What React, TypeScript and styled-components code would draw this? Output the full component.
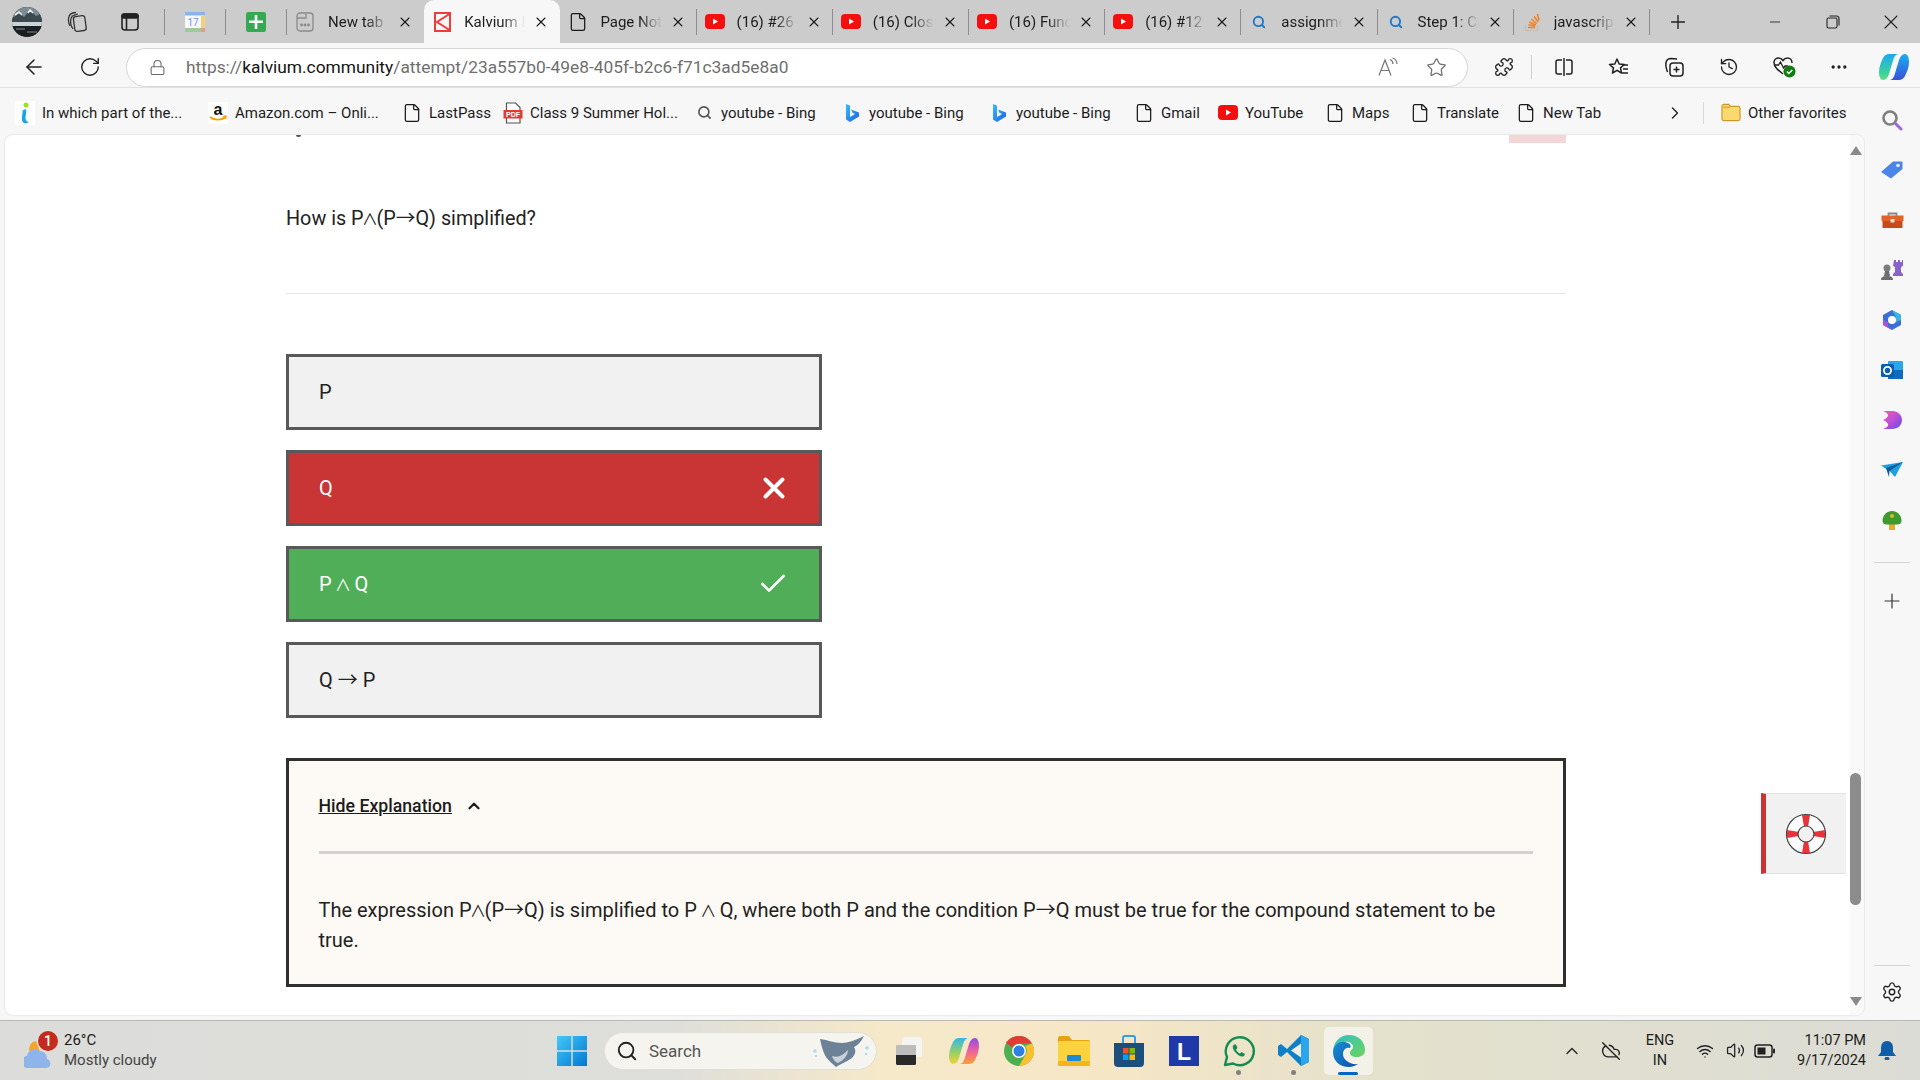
import React from 'react';
import styled, { createGlobalStyle } from 'styled-components';
import {
  ArrowLeft, RotateCw, X, Plus, Minus, Star, File, Search, ChevronRight, ChevronUp, Check,
  Settings, Puzzle, History, MoreHorizontal, Wifi, Volume2, CloudOff, Lock,
} from 'lucide-react';

const Global = createGlobalStyle`
  html, body { margin: 0; padding: 0; background: #f7f7f7; }
  body { font-family: Roboto, "Liberation Sans", sans-serif; color: #1c1c1c; overflow: hidden; }
  * { box-sizing: border-box; }
`;

const Screen = styled.div`
  width: 1920px; height: 1080px; display: flex; flex-direction: column; overflow: hidden;
`;

/* ---------- tab strip ---------- */
const TabStrip = styled.div`
  height: 43px; background: #cccccc; display: flex; align-items: stretch; flex: none;
`;
const StripTools = styled.div`
  width: 288px; flex: none; display: flex; align-items: center; padding-left: 12px;
`;
const ToolSlot = styled.div<{ $w: number }>`
  width: ${p => p.$w}px; height: 100%; flex: none; display: flex; align-items: center; justify-content: center;
`;
const VSep = styled.div`
  width: 1px; height: 26px; background: #8e8e8e; flex: none;
`;
const Tab = styled.div<{ $active?: boolean; $sep?: boolean }>`
  width: 136.2px; flex: none; position: relative; display: flex; align-items: center;
  padding-left: ${p => (p.$active ? 10 : 8)}px; padding-right: 11px;
  background: ${p => (p.$active ? '#f7f7f7' : 'transparent')};
  border-radius: ${p => (p.$active ? '10px 10px 0 0' : '0')};
  ${p => p.$sep ? `&::after { content: ''; position: absolute; right: 0; top: 9px; height: 26px; width: 1px; background: #8e8e8e; }` : ''}
`;
const TabIcon = styled.div<{ $w: number; $pad?: number }>`
  width: ${p => p.$w}px; padding-left: ${p => p.$pad || 0}px; flex: none; display: flex; align-items: center; justify-content: flex-start;
`;
const TabTitle = styled.div`
  flex: 1; min-width: 0; margin-right: 8px; font-size: 15px; white-space: nowrap; overflow: hidden; color: #1c1c1c;
  -webkit-mask-image: linear-gradient(90deg, #000 62%, transparent 100%);
  mask-image: linear-gradient(90deg, #000 62%, transparent 100%);
`;
const TabClose = styled.div`
  width: 16px; flex: none; display: flex; align-items: center; justify-content: center; color: #1a1a1a;
`;
const NewTabBtn = styled.div`
  width: 56px; flex: none; display: flex; align-items: center; justify-content: center; color: #222;
`;
const WindowControls = styled.div`
  margin-left: auto; display: flex; align-items: center; color: #222;
`;
const WinBtn = styled.div`
  width: 58px; height: 43px; display: flex; align-items: center; justify-content: center;
`;

/* ---------- toolbar ---------- */
const Toolbar = styled.div`
  height: 45px; flex: none; background: #f7f7f7; display: flex; align-items: center; border-bottom: 1px solid #e3e3e3;
  padding: 4px 0 0 6px;
`;
const NavBtn = styled.div`
  width: 56px; flex: none; display: flex; align-items: center; justify-content: center; color: #222;
`;
const AddressBar = styled.div`
  width: 1342px; height: 39px; flex: none; margin-left: 8px; background: #fff; border: 1px solid #d6d6d6; border-radius: 20px;
  display: flex; align-items: center; padding: 0 20px 0 22px; color: #6b6b6b;
`;
const AddressText = styled.div`
  margin-left: 20px; font-size: 17.35px; color: #6f6f6f; white-space: nowrap;
  b { font-weight: 400; color: #141414; }
`;
const AddressActions = styled.div`
  margin-left: auto; display: flex; align-items: center; gap: 28px; color: #6f6f6f;
`;
const ToolIcons = styled.div`
  flex: 1; display: flex; align-items: center; padding-left: 8px; color: #222;
`;
const ToolIcon = styled.div`
  width: 55px; flex: none; display: flex; align-items: center; justify-content: center;
`;
const ToolSep = styled.div`
  width: 1px; height: 24px; background: #cfcfcf; margin: 0 4px 0 0; flex: none;
`;

/* ---------- body ---------- */
const Body = styled.div`
  flex: 1; display: flex; min-height: 0;
`;
const MainColumn = styled.div`
  width: 1864px; flex: none; display: flex; flex-direction: column; min-height: 0;
`;
const Bookmarks = styled.div`
  height: 47px; flex: none; display: flex; align-items: center; padding: 2px 0 0 15px; font-size: 15px; color: #1c1c1c;
`;
const Bookmark = styled.div<{ $w: number }>`
  width: ${p => p.$w}px; flex: none; display: flex; align-items: center; white-space: nowrap;
`;
const BookmarkIcon = styled.div`
  width: 20px; margin-right: 7px; flex: none; display: flex; align-items: center; justify-content: center;
`;
const BookmarkMore = styled.div`
  width: 56px; display: flex; justify-content: center; margin-left: 29px; color: #222; flex: none;
`;
const BookmarkSep = styled.div`
  width: 1px; height: 22px; background: #d8d8d8; margin: 0 17px 0 0; flex: none;
`;

const Card = styled.div`
  flex: 1; margin: 0 0 5px 5px; background: #fff; border-radius: 8px; box-shadow: 0 0 2px rgba(0,0,0,.18);
  display: flex; position: relative; overflow: hidden; min-height: 0;
`;
const Content = styled.div`
  width: 1845px; flex: none; padding-left: 281px; padding-right: 284px;
`;
const TopClip = styled.div`
  height: 8px; display: flex; justify-content: space-between;
`;
const ClipMark = styled.div`
  width: 5px; height: 2px; margin-left: 10px; background: #555; border-radius: 0 0 3px 3px;
`;
const ClipBar = styled.div`
  width: 57px; height: 8px; background: #f3d6d6;
`;
const Question = styled.div`
  margin-top: 61px; font-size: 19.8px; line-height: 30px; color: #222;
`;
const Rule = styled.div`
  height: 1px; background: #e6e6e6; margin-top: 59px;
`;
const Options = styled.div`
  margin-top: 60px; display: flex; flex-direction: column; gap: 20px;
`;
const Option = styled.div<{ $state?: 'wrong' | 'right' }>`
  width: 536px; height: 76px; border: 3px solid #595959; display: flex; align-items: center; justify-content: space-between;
  padding: 0 28px 0 30px; font-size: 20px;
  background: ${p => (p.$state === 'wrong' ? '#c93434' : p.$state === 'right' ? '#4fae57' : '#f1f1f1')};
  color: ${p => (p.$state ? '#fff' : '#222')};
`;
const CheckMark = styled(Check)`
  margin-right: 2px;
`;
const Arrow = styled.span`
  font-family: "Noto Sans CJK SC", sans-serif; line-height: 0;
`;
const Wedge = styled.span`
  font-family: "Noto Sans CJK SC", sans-serif; line-height: 0; font-size: 0.8em; margin: 0 -1.5px;
`;
const Explain = styled.div`
  margin-top: 40px; height: 229px; border: 3px solid #2f2f2f; background: #fdfaf6; padding: 30px 30px 0 29.5px;
`;
const ExplainHead = styled.div`
  height: 30px; display: flex; align-items: center; gap: 13px; font-size: 17.7px; font-weight: 500; color: #1c1c1c;
`;
const HeadLink = styled.span`
  text-decoration: underline;
`;
const ExplainRule = styled.div`
  height: 3px; background: #d2d2d2; margin-top: 30px;
`;
const ExplainText = styled.div`
  margin-top: 41px; font-size: 20px; line-height: 30px; color: #222;
`;

const Help = styled.div`
  position: absolute; left: 1756px; top: 658px; width: 85px; height: 81px;
  background: #f1f1f1; border-left: 5px solid #c93434; border-top: 1px solid #e2e2e2; border-bottom: 1px solid #e2e2e2;
  display: flex; align-items: center; justify-content: center;
`;
const Track = styled.div`
  width: 14px; flex: 1; background: #f9f9f9; display: flex; flex-direction: column; align-items: center; padding: 11px 3px 9px 0;
`;
const ArrowUp = styled.div`
  width: 0; height: 0; flex: none; border-left: 6px solid transparent; border-right: 6px solid transparent; border-bottom: 9px solid #8a8a8a;
`;
const ArrowDown = styled.div`
  width: 0; height: 0; flex: none; border-left: 6px solid transparent; border-right: 6px solid transparent; border-top: 9px solid #8a8a8a; margin-top: auto;
`;
const Thumb = styled.div`
  width: 11px; height: 132px; flex: none; background: #8c8c8c; border-radius: 6px; margin-top: 618px;
`;

/* ---------- sidebar ---------- */
const Sidebar = styled.div`
  flex: 1; background: #f7f7f7; display: flex; flex-direction: column; align-items: center; padding-top: 7px;
`;
const SideIcon = styled.div`
  height: 50px; flex: none; display: flex; align-items: center; justify-content: center; color: #333;
`;
const SideSep = styled.div`
  width: 36px; height: 1px; background: #d4d4d4; margin: 17px 0 13px; flex: none;
`;
const FootSep = styled(SideSep)`
  margin: 0 0 15px;
`;
const SideBottom = styled.div`
  margin-top: auto; width: 100%; display: flex; flex-direction: column; align-items: center; padding-bottom: 17px; color: #222;
`;

/* ---------- taskbar ---------- */
const Taskbar = styled.div`
  height: 60px; flex: none; border-top: 1px solid #b9b9b4; display: flex; align-items: center; position: relative;
  background: linear-gradient(90deg, #dcdcda 0%, #dededa 35%, #f6e9c9 46%, #f5e6c6 58%, #e4e1cc 72%, #dcdcd6 100%);
`;
const Weather = styled.div`
  width: 544px; flex: none; padding-left: 24px; display: flex; align-items: center; gap: 8px; position: relative;
`;
const WeatherIcon = styled.div`
  width: 32px; height: 40px; position: relative; flex: none;
`;
const Badge = styled.div`
  position: absolute; left: 14px; top: 0px; width: 20px; height: 20px; border-radius: 50%; background: #c42b1c;
  color: #fff; font-size: 14px; font-weight: 500; display: flex; align-items: center; justify-content: center;
`;
const WeatherText = styled.div`
  font-size: 15px; line-height: 20px; color: #1c1c1c; margin-top: -1px;
  small { display: block; font-size: 15px; color: #444; }
`;
const StartSlot = styled.div`
  width: 55px; flex: none; display: flex; justify-content: center;
`;
const SearchPill = styled.div`
  width: 273px; height: 38px; margin-left: 5px; flex: none; border-radius: 19px; background: #f6f4ee; border: 1px solid #e2dfd6;
  display: flex; align-items: center; padding: 0 6px 0 11px; color: #222; gap: 11px; font-size: 17px;
`;
const SearchWord = styled.span`
  color: #555; flex: 1;
`;
const Apps = styled.div`
  display: flex; align-items: center; margin-left: 4px;
`;
const AppSlot = styled.div<{ $active?: boolean; $dot?: boolean }>`
  width: 55px; height: 48px; flex: none; display: flex; align-items: center; justify-content: center; position: relative;
  ${p => p.$active ? `&::before { content: ''; position: absolute; left: 3px; right: 3px; top: 0; bottom: 0; background: #f4f2e8; border-radius: 5px; }
    &::after { content: ''; position: absolute; left: 17px; width: 20px; bottom: 0; height: 3px; background: #0067c0; border-radius: 2px; }` : ''}
  ${p => p.$dot ? `&::after { content: ''; position: absolute; left: 25px; bottom: 0; width: 5px; height: 5px; background: #808080; border-radius: 50%; }` : ''}
  > * { position: relative; z-index: 1; }
`;
const Tray = styled.div`
  margin-left: auto; padding-right: 12px; display: flex; align-items: center; color: #222; height: 100%;
`;
const TraySlot = styled.div<{ $w: number }>`
  width: ${p => p.$w}px; flex: none; display: flex; justify-content: center; align-items: center;
`;
const TrayText = styled.div<{ $w: number; $align?: string }>`
  width: ${p => p.$w}px; flex: none; font-size: 14.5px; line-height: 20px; text-align: ${p => p.$align || 'center'}; color: #1c1c1c;
`;

/* ---------- drawings ---------- */
const Avatar = () => (
  <svg width="30" height="30" viewBox="0 0 30 30">
    <defs><clipPath id="av"><circle cx="15" cy="15" r="15" /></clipPath></defs>
    <g clipPath="url(#av)">
      <rect width="30" height="30" fill="#2c3338" />
      <rect width="30" height="10" fill="#7d8b94" />
      <path d="M0 12 L7 5 L12 10 L18 3 L24 9 L30 6 V16 H0Z" fill="#3c4a50" />
      <path d="M3 8 L7 5 L10 8 M16 6 L18 3 L21 6" stroke="#e8edf0" strokeWidth="1.6" fill="none" />
      <rect y="15" width="30" height="4" fill="#c9d3d8" />
      <rect y="19" width="30" height="11" fill="#1a1f22" />
      <path d="M4 22h9M15 25h10" stroke="#7b8a90" strokeWidth="1.2" />
    </g>
  </svg>
);
const CollectionsIcon = () => (
  <svg width="22" height="22" viewBox="0 0 22 22" fill="none" stroke="#333" strokeWidth="1.3">
    <rect x="8" y="5" width="11.5" height="15" rx="2.5" transform="rotate(-8 14 12)" />
    <path d="M7 18C5 15 4 11 5 7.5c.4-1.7 1.8-3 3.5-3.4L12 3" />
    <path d="M4 15C2.5 12 2 8.5 3 5.5 3.5 3.8 5 2.5 7 2l3-.5" />
  </svg>
);
const TabsIcon = () => (
  <svg width="20" height="20" viewBox="0 0 20 20" fill="none" stroke="#222" strokeWidth="1.6">
    <rect x="2" y="2" width="16" height="16" rx="3" />
    <rect x="2" y="2" width="16" height="4" rx="2" fill="#222" />
    <path d="M6.5 5v13" />
  </svg>
);
const CalendarIcon = () => (
  <svg width="20" height="20" viewBox="0 0 20 20">
    <rect width="20" height="20" rx="2" fill="#f6f8fd" />
    <rect width="20" height="3.5" fill="#8ab4e8" />
    <rect y="16" width="16" height="4" fill="#9ccc9c" />
    <rect x="16" y="3.5" width="4" height="13" fill="#f0d27a" />
    <rect x="16" y="16" width="4" height="4" fill="#e89a8e" />
    <text x="8" y="14" fontSize="10" textAnchor="middle" fontFamily="Roboto" fill="#6b9ad8">17</text>
  </svg>
);
const GreenPlus = () => (
  <svg width="20" height="20" viewBox="0 0 20 20">
    <rect width="20" height="20" rx="2.5" fill="#34a853" />
    <path d="M8.7 3h2.6v5.500H17V11h-5.700v6H8.700v-6H3V8.500h5.700z" fill="#fff" />
  </svg>
);
const NewTabFav = () => (
  <svg width="18" height="22" viewBox="0 0 18 22" fill="none" stroke="#8a8a8a" strokeWidth="1.3">
    <rect x="1" y="2" width="16" height="18" rx="3" />
    <path d="M1 7h9V2" />
    <circle cx="5.5" cy="14" r=".8" fill="#8a8a8a" /><circle cx="9" cy="14" r=".8" fill="#8a8a8a" /><circle cx="12.5" cy="14" r=".8" fill="#8a8a8a" />
  </svg>
);
const KalviumFav = () => (
  <svg width="17" height="20" viewBox="0 0 17 20" fill="none" stroke="#ef3b3b" strokeWidth="2">
    <rect x="1" y="1" width="15" height="18" />
    <path d="M15.5 2 L3 10 L15.5 18" />
  </svg>
);
const YouTube = () => (
  <svg width="20" height="15" viewBox="0 0 20 15">
    <rect width="20" height="15" rx="4" fill="#f40f0f" />
    <path d="M8 4.500v6l5-3z" fill="#fff" />
  </svg>
);
const StackOverflow = () => (
  <svg width="17" height="20" viewBox="0 0 17 20" fill="none">
    <path d="M1.500 13v5.500h12V13" stroke="#c9c0b4" strokeWidth="1.500" />
    <path d="M4 15.500h7M4.300 12.800l7 1.200M5.300 10l6.500 3M7.300 7l5.400 4.600M10 4.300l4 5.600M13.400 2l1.600 6.500" stroke="#f48024" strokeWidth="1.600" />
  </svg>
);
const DocIcon = () => <File size={20} strokeWidth={1.5} color="#1a1a1a" />;
const BlueSearch = () => <Search size={14} strokeWidth={3.2} color="#1f78c8" />;
const SearchGray = () => <Search size={15} strokeWidth={2.6} color="#555" />;
const BingIcon = () => (
  <svg width="15" height="20" viewBox="0 0 15 20">
    <defs><linearGradient id="bg" x1="0" y1="0" x2="1" y2="1"><stop offset="0" stopColor="#37bdff" /><stop offset="1" stopColor="#1e60e0" /></linearGradient></defs>
    <path d="M1 1l4 1.500v11.500l5-3-2.500-1.200L6 6.500l8 3v4L5 19l-4-2.500z" fill="url(#bg)" />
  </svg>
);
const AmazonIcon = () => (
  <svg width="20" height="22" viewBox="0 0 20 22">
    <rect width="20" height="22" fill="#fff" />
    <text x="10" y="13" textAnchor="middle" fontSize="16" fontWeight="700" fontFamily="Liberation Sans" fill="#111">a</text>
    <path d="M2 15c4 3.500 11 3.500 15 .5" stroke="#f90" strokeWidth="1.800" fill="none" />
    <path d="M15 14.500l3-.5-.5 3" stroke="#f90" strokeWidth="1.300" fill="none" />
  </svg>
);
const PdfIcon = () => (
  <svg width="20" height="22" viewBox="0 0 20 22">
    <path d="M3.500 1h9l4.500 4.500V21h-13.500z" fill="#fff" stroke="#555" strokeWidth="1.200" />
    <rect x="0.500" y="8" width="19" height="8.500" fill="#e53935" />
    <text x="10" y="15" textAnchor="middle" fontSize="7" fontWeight="700" fontFamily="Liberation Sans" fill="#fff">PDF</text>
  </svg>
);
const InfoI = () => (
  <svg width="20" height="24" viewBox="0 0 20 24">
    <rect width="20" height="24" fill="#fff" />
    <circle cx="11" cy="4" r="2.500" fill="#9be21f" />
    <path d="M11 8c1 4-1.500 8 0 11 .5 1.500 2 2 3 1.500-1 2-5 3-6.500 0-1.500-3 .5-8 0-11z" fill="#18a5e6" />
  </svg>
);
const FolderIcon = () => (
  <svg width="21" height="19" viewBox="0 0 21 19">
    <path d="M1 3a2 2 0 012-2h5l2 2h8a2 2 0 012 2v11a2 2 0 01-2 2H3a2 2 0 01-2-2z" fill="#fbd970" stroke="#c79a2b" strokeWidth="1.200" />
    <path d="M1 5h8l1.500-2H3z" fill="#e9b13c" />
  </svg>
);
const ReadAloud = () => (
  <svg width="20" height="20" viewBox="0 0 20 20" fill="none" stroke="#777" strokeWidth="1.200">
    <path d="M1 18.500L7 3l6 15.500M3 13.500h8" />
    <path d="M12 2.500c2 .8 3 2.500 3 4.500M14.500 1c3 1 4.500 3.500 4.500 6" />
  </svg>
);
const SplitIcon = () => (
  <svg width="20" height="20" viewBox="0 0 20 20" fill="none" stroke="#222" strokeWidth="1.500">
    <path d="M8 3H4a2 2 0 00-2 2v10a2 2 0 002 2h4M12 3h4a2 2 0 012 2v10a2 2 0 01-2 2h-4M10 1v18" />
  </svg>
);
const FavList = () => (
  <svg width="21" height="20" viewBox="0 0 21 20" fill="none" stroke="#222" strokeWidth="1.500">
    <path d="M9 2l2.200 5 5 .5-3.700 3.400 1 5.100L9 13.300 4.500 16l1-5.100L1.500 7.500l5.300-.5z" strokeLinejoin="round" />
    <path d="M14 8h6M15 12h5M14 16h6" />
  </svg>
);
const CollectAdd = () => (
  <svg width="20" height="20" viewBox="0 0 20 20" fill="none" stroke="#222" strokeWidth="1.500">
    <rect x="6" y="6" width="13" height="13" rx="3" />
    <path d="M12.500 9.500v6M9.500 12.500h6" />
    <path d="M3.500 15C2 11 1.500 8 2 5.500 2.500 3 4.500 1.500 7 1.500l6 .5" />
  </svg>
);
const HeartCheck = () => (
  <svg width="24" height="22" viewBox="0 0 24 22" fill="none">
    <path d="M11 18C6 14 2 11 2 6.500 2 3.500 4.500 2 6.500 2c2 0 3.500 1 4.500 2.500C12 3 13.500 2 15.500 2 18 2 20 4 20 7" stroke="#222" strokeWidth="1.500" />
    <path d="M2 9h4.500l2-3 3 6 1.500-2h3" stroke="#222" strokeWidth="1.300" />
    <circle cx="17.500" cy="15.500" r="6" fill="#107c10" />
    <path d="M14.800 15.500l2 2 3.500-3.500" stroke="#fff" strokeWidth="1.500" />
  </svg>
);
const RibbonPath = 'M10 2h10c-3 0-4.500 2-5.500 5l-4.500 15c-1 3-3 6-6 6-2.500 0-4-3-4-8 0-5 2-10 4-14 1.500-2.500 3.500-4 6-4z';
const CopilotIcon = () => (
  <svg width="30" height="30" viewBox="0 0 30 30">
    <defs>
      <linearGradient id="c1" x1="0" y1="0" x2="0" y2="1"><stop offset="0" stopColor="#1fa8f0" /><stop offset=".7" stopColor="#38d0a0" /><stop offset="1" stopColor="#5fe080" /></linearGradient>
      <linearGradient id="c2" x1="0" y1="0" x2="0" y2="1"><stop offset="0" stopColor="#3a50d8" /><stop offset="1" stopColor="#18b0f0" /></linearGradient>
    </defs>
    <path d={RibbonPath} fill="url(#c1)" />
    <path d={RibbonPath} fill="url(#c2)" transform="rotate(180 15 15)" />
  </svg>
);
const TaskCopilot = () => (
  <svg width="30" height="32" viewBox="0 0 30 30">
    <defs>
      <linearGradient id="t1" x1="0" y1="0" x2="0" y2="1"><stop offset="0" stopColor="#30b8e8" /><stop offset=".6" stopColor="#a0d060" /><stop offset="1" stopColor="#f5d338" /></linearGradient>
      <linearGradient id="t2" x1="0" y1="0" x2="0" y2="1"><stop offset="0" stopColor="#f9a030" /><stop offset=".5" stopColor="#f05fa0" /><stop offset="1" stopColor="#8a50e0" /></linearGradient>
    </defs>
    <path d={RibbonPath} fill="url(#t1)" />
    <path d={RibbonPath} fill="url(#t2)" transform="rotate(180 15 15)" />
  </svg>
);
const SideSearch = () => (
  <svg width="22" height="22" viewBox="0 0 22 22" fill="none">
    <circle cx="9" cy="9" r="6.500" stroke="#808080" strokeWidth="2.600" />
    <path d="M14 14l6 6" stroke="#9a6ad8" strokeWidth="3" strokeLinecap="round" />
  </svg>
);
const TagIcon = () => (
  <svg width="24" height="20" viewBox="0 0 24 20">
    <path d="M1 12L13 1.500h9.500V9L11 18.500z" fill="#4a86e8" />
    <circle cx="18" cy="5.500" r="1.800" fill="#e8f0ff" />
  </svg>
);
const ToolboxIcon = () => (
  <svg width="23" height="18" viewBox="0 0 23 18">
    <path d="M7.500 5V2.500h8V5" fill="none" stroke="#8a8a8a" strokeWidth="1.800" />
    <rect x="0.500" y="4.500" width="22" height="5.500" fill="#e2622a" />
    <rect x="1.500" y="10" width="20" height="7" fill="#c84a18" />
    <rect x="9.500" y="8" width="4" height="3.500" fill="#e0e0e0" />
  </svg>
);
const ChessIcon = () => (
  <svg width="24" height="22" viewBox="0 0 24 22">
    <path d="M14 1h2v2h2V1h2v2h2V1h1v6l-2 1v5l2 2v2H13v-2l2-2V8l-2-1z" fill="#8a63c8" />
    <circle cx="7" cy="9" r="3.500" fill="#7d7d7d" />
    <path d="M5 12h4l1 5H4zM1 21c0-3 2-4 6-4s6 1 6 4z" fill="#6e6e6e" />
  </svg>
);
const M365Icon = () => (
  <svg width="22" height="22" viewBox="0 0 22 22">
    <path d="M11 1l9 5v10l-9 5-9-5V6z" fill="#3b6fd8" />
    <path d="M11 1l9 5v5l-5 2V8z" fill="#38b6e8" />
    <path d="M2 11l5 2v4l4 4-9-5z" fill="#a855d8" />
    <circle cx="11" cy="11" r="4" fill="#fff" />
  </svg>
);
const OutlookIcon = () => (
  <svg width="22" height="20" viewBox="0 0 22 20">
    <rect x="7" y="1" width="15" height="18" rx="1" fill="#28a8ea" />
    <rect x="7" y="10" width="15" height="9" fill="#0f6cbd" />
    <rect x="0" y="4" width="13" height="13" rx="1.500" fill="#0a5fb0" />
    <circle cx="6.500" cy="10.500" r="3.600" fill="none" stroke="#fff" strokeWidth="1.800" />
  </svg>
);
const DropsIcon = () => (
  <svg width="22" height="20" viewBox="0 0 22 20">
    <defs><linearGradient id="dr" x1="0" y1="0" x2="1" y2="1"><stop offset="0" stopColor="#f060a0" /><stop offset=".5" stopColor="#c04ed8" /><stop offset="1" stopColor="#5a50e8" /></linearGradient></defs>
    <path d="M2 1h9c6 0 10 4 10 9s-4 9-10 9H2c3-1 6-3 5-5-.5-1.500-3-3-5-4 2-1 4.500-2.500 5-4 .5-2-2-4-5-5z" fill="url(#dr)" />
  </svg>
);
const SendIcon = () => (
  <svg width="22" height="16" viewBox="0 0 22 16">
    <path d="M0 3.500L22 0 14 15 9 9.500z" fill="#1ca0e0" />
    <path d="M5 6L22 0 8.500 9 8 15z" fill="#0f5a98" />
  </svg>
);
const TreeIcon = () => (
  <svg width="20" height="21" viewBox="0 0 20 21">
    <rect x="7" y="13" width="6" height="7" fill="#eda92a" />
    <path d="M0.500 11C0.500 5 5 1 10 1s9.500 4 9.500 10c0 2.500-2 3.500-4 3.500h-11c-2 0-4-1-4-3.500z" fill="#3c9a2e" />
    <circle cx="10" cy="6" r="2" fill="#e8b62e" />
  </svg>
);
const Lifebuoy = () => (
  <svg width="42" height="42" viewBox="0 0 42 42">
    <circle cx="21" cy="21" r="19.500" fill="#fff" stroke="#444" strokeWidth="1.200" />
    <path d="M17 2l8 0-2 12h-4zM17 40l8 0-2-12h-4zM2 17v8l12-2v-4zM40 17v8l-12-2v-4z" fill="#e9333a" />
    <circle cx="21" cy="21" r="8" fill="#f1f1f1" stroke="#444" strokeWidth="1.200" />
  </svg>
);
const WeatherArt = () => (
  <svg width="32" height="30" viewBox="0 0 32 30" style={{ position: 'absolute', left: 0, top: 9 }}>
    <path d="M12 1a8 8 0 00-4 14l8-3z" fill="#f4a62a" />
    <path d="M4 28a6 6 0 01-1-12c1-6 8-8 12-5 4 0 8 2 8 8 4 0 5 9-1 9z" fill="#8fb4ec" />
  </svg>
);
const WinLogo = () => (
  <svg width="30" height="30" viewBox="0 0 30 30">
    <defs><linearGradient id="wl" x1="0" y1="0" x2="1" y2="1"><stop offset="0" stopColor="#45c8f8" /><stop offset="1" stopColor="#0078d4" /></linearGradient></defs>
    <path d="M0 0h14.300v14.300H0zM15.700 0H30v14.300H15.700zM0 15.700h14.300V30H0zM15.700 15.700H30V30H15.700z" fill="url(#wl)" />
  </svg>
);
const Manta = () => (
  <svg width="58" height="34" viewBox="0 0 58 34">
    <path d="M8 5c8 1 14 4 22 4 6 0 14-3 22-7-3 6-6 9-10 11 2 3 2 7-2 11-6 4-12 6-16 9-4-4-10-8-12-14C10 14 9 10 8 5z" fill="#6d8296" />
    <path d="M20 22c6 2 10 0 16-6 0 5-4 10-10 13-3-1-5-4-6-7z" fill="#c7d2dc" />
    <circle cx="3" cy="17" r="1.800" fill="#a8dcf0" /><circle cx="55" cy="14" r="1.800" fill="#a8dcf0" /><circle cx="4" cy="22" r="1.200" fill="#a8dcf0" /><circle cx="54" cy="20" r="1.200" fill="#a8dcf0" />
  </svg>
);
const TaskView = () => (
  <svg width="26" height="30" viewBox="0 0 26 30">
    <rect x="6" y="1" width="20" height="20" rx="2" fill="#f4f4f2" />
    <rect x="0" y="9" width="20" height="20" rx="1.500" fill="#2a2a2a" />
    <rect x="0" y="9" width="20" height="10" fill="#bdbdbd" />
  </svg>
);
const Chrome = () => (
  <svg width="30" height="30" viewBox="0 0 30 30">
    <circle cx="15" cy="15" r="15" fill="#4caf50" />
    <path d="M15 0a15 15 0 0113 7.500H15a7.500 7.500 0 00-6.500 3.700L2 7C4.600 2.800 9.500 0 15 0z" fill="#e53935" />
    <path d="M28 7.500A15 15 0 0115 30l6.500-11.300A7.500 7.500 0 0021 10z" fill="#fbc02d" />
    <circle cx="15" cy="15" r="7" fill="#fff" />
    <circle cx="15" cy="15" r="5.500" fill="#2f7fe8" />
  </svg>
);
const Explorer = () => (
  <svg width="32" height="30" viewBox="0 0 32 30">
    <path d="M0 2a2 2 0 012-2h9l3 4h16a2 2 0 012 2v4H0z" fill="#e5a312" />
    <rect y="5" width="32" height="25" rx="2" fill="#fcd33e" />
    <rect x="9" y="19" width="14" height="6" rx="1" fill="#1c8ad6" />
    <rect y="25" width="32" height="5" rx="1" fill="#f3b41d" />
  </svg>
);
const Store = () => (
  <svg width="30" height="32" viewBox="0 0 30 32">
    <path d="M9 8V3a2 2 0 012-2h8a2 2 0 012 2v5" fill="none" stroke="#2f9fe8" strokeWidth="2" />
    <path d="M0 8h30v20a4 4 0 01-4 4H4a4 4 0 01-4-4z" fill="#1c4f7c" />
    <rect x="9" y="13" width="5.500" height="5.500" fill="#f25022" /><rect x="15.500" y="13" width="5.500" height="5.500" fill="#7fba00" />
    <rect x="9" y="19.500" width="5.500" height="5.500" fill="#00a4ef" /><rect x="15.500" y="19.500" width="5.500" height="5.500" fill="#ffb900" />
  </svg>
);
const LApp = () => (
  <svg width="30" height="30" viewBox="0 0 30 30">
    <rect width="30" height="30" fill="#1f3aa8" />
    <text x="15" y="24" textAnchor="middle" fontFamily="Liberation Sans" fontWeight="700" fontSize="23" fill="#fff">L</text>
  </svg>
);
const WhatsApp = () => (
  <svg width="32" height="32" viewBox="0 0 32 32" fill="none">
    <path d="M2 30l2-8A14 14 0 1110 28.500z" stroke="#128c50" strokeWidth="2.400" strokeLinejoin="round" />
    <path d="M11 9.500c-2 1.500-1.500 4.500 1.500 8s6.500 5 8.500 3.500l1-2-3.500-2-1.500 1.500c-1.500-.5-3.500-2.500-4-4l1.500-1.500-1.500-3.500z" fill="#128c50" />
  </svg>
);
const VSCode = () => (
  <svg width="31" height="31" viewBox="0 0 31 31">
    <path d="M23 0l8 4v23l-8 4L9 17l-6 5-3-2v-9l3-2 6 5z" fill="#0f7fc8" />
    <path d="M23 0l8 4v23l-8 4z" fill="#2aa5ee" />
    <path d="M23 8.500L13 15.500l10 7z" fill="#f0eee4" />
  </svg>
);
const Edge = () => (
  <svg width="32" height="32" viewBox="0 0 32 32">
    <defs>
      <linearGradient id="e1" x1="0" y1="0" x2="1" y2="1"><stop offset="0" stopColor="#2ec2c8" /><stop offset="1" stopColor="#6cd35a" /></linearGradient>
      <linearGradient id="e2" x1="0" y1="0" x2="1" y2="1"><stop offset="0" stopColor="#1a8ed8" /><stop offset="1" stopColor="#0c4fa8" /></linearGradient>
    </defs>
    <path d="M16 0c10 0 16 7 16 15 0 5-4 7-8 7-5 0-7-2-7-4 0-3 3-3 3-6 0-4-5-6-9-5C6 8 2 12 0 17 0 7 7 0 16 0z" fill="url(#e1)" />
    <path d="M0 17C1 8 8 6 12 7c4 1 7 3 5 6-4-1-7 2-7 6 0 6 7 11 15 10-3 2-6 3-9 3C7 32 0 26 0 17z" fill="url(#e2)" />
  </svg>
);
const TrayBattery = () => (
  <svg width="22" height="14" viewBox="0 0 22 14" fill="none">
    <rect x="1" y="1" width="17" height="12" rx="2.500" stroke="#222" strokeWidth="1.500" />
    <rect x="3.500" y="3.500" width="8" height="7" fill="#222" />
    <rect x="19" y="4.500" width="2" height="5" rx="1" fill="#222" />
  </svg>
);
const TrayBell = () => (
  <svg width="18" height="21" viewBox="0 0 18 21">
    <path d="M9 1c4 0 6 3 6 7v4l3 4H0l3-4V8c0-4 2-7 6-7z" fill="#0f5fa8" />
    <rect x="6.500" y="17" width="5" height="3" rx="1.500" fill="#0f5fa8" />
  </svg>
);

/* ---------- data ---------- */
type TabData = { title: string; icon: React.ReactNode; active?: boolean; sep?: boolean; pad?: number };
const tabs: TabData[] = [
  { title: 'New tab', icon: <NewTabFav /> },
  { title: 'Kalvium Labs', icon: <KalviumFav />, active: true },
  { title: 'Page Not Found', icon: <DocIcon />, sep: true },
  { title: '(16) #26 Arrays', icon: <YouTube />, sep: true },
  { title: '(16) Closures', icon: <YouTube />, sep: true },
  { title: '(16) Functions', icon: <YouTube />, sep: true },
  { title: '(16) #12 Loops', icon: <YouTube />, sep: true },
  { title: 'assignment', icon: <BlueSearch />, sep: true, pad: 3 },
  { title: 'Step 1: Create', icon: <BlueSearch />, sep: true, pad: 3 },
  { title: 'javascript', icon: <StackOverflow />, sep: true, pad: 2 },
];
const marks: { label: string; icon: React.ReactNode; w: number }[] = [
  { label: 'In which part of the...', icon: <InfoI />, w: 193 },
  { label: 'Amazon.com – Onli...', icon: <AmazonIcon />, w: 194 },
  { label: 'LastPass', icon: <DocIcon />, w: 101 },
  { label: 'Class 9 Summer Hol...', icon: <PdfIcon />, w: 191 },
  { label: 'youtube - Bing', icon: <SearchGray />, w: 148 },
  { label: 'youtube - Bing', icon: <BingIcon />, w: 147 },
  { label: 'youtube - Bing', icon: <BingIcon />, w: 145 },
  { label: 'Gmail', icon: <DocIcon />, w: 84 },
  { label: 'YouTube', icon: <YouTube />, w: 107 },
  { label: 'Maps', icon: <DocIcon />, w: 85 },
  { label: 'Translate', icon: <DocIcon />, w: 106 },
  { label: 'New Tab', icon: <DocIcon />, w: 102 },
];
const sideIcons = [<TagIcon />, <ToolboxIcon />, <ChessIcon />, <M365Icon />, <OutlookIcon />, <DropsIcon />, <SendIcon />, <TreeIcon />];

export default function App() {
  return (
    <Screen>
      <Global />
      <TabStrip>
        <StripTools>
          <Avatar />
          <ToolSlot $w={70}><CollectionsIcon /></ToolSlot>
          <ToolSlot $w={36}><TabsIcon /></ToolSlot>
          <ToolSlot $w={16} />
          <VSep />
          <ToolSlot $w={60}><CalendarIcon /></ToolSlot>
          <VSep />
          <ToolSlot $w={60}><GreenPlus /></ToolSlot>
          <VSep />
        </StripTools>
        {tabs.map(t => (
          <Tab key={t.title} $active={t.active} $sep={t.sep}>
            <TabIcon $w={t.active ? 30 : 32} $pad={t.pad}>{t.icon}</TabIcon>
            <TabTitle>{t.title}</TabTitle>
            <TabClose><X size={16} strokeWidth={1.6} /></TabClose>
          </Tab>
        ))}
        <NewTabBtn><Plus size={22} strokeWidth={1.5} /></NewTabBtn>
        <WindowControls>
          <WinBtn><Minus size={16} strokeWidth={1.3} /></WinBtn>
          <WinBtn>
            <svg width="14" height="14" viewBox="0 0 14 14" fill="none" stroke="#222" strokeWidth="1.100">
              <rect x="1" y="3" width="10" height="10" rx="1.500" /><path d="M3.500 1h7a2.500 2.500 0 012.500 2.500v7" />
            </svg>
          </WinBtn>
          <WinBtn><X size={24} strokeWidth={1.1} /></WinBtn>
        </WindowControls>
      </TabStrip>

      <Toolbar>
        <NavBtn><ArrowLeft size={24} strokeWidth={1.5} /></NavBtn>
        <NavBtn><RotateCw size={22} strokeWidth={1.5} /></NavBtn>
        <AddressBar>
          <Lock size={17} strokeWidth={1.5} />
          <AddressText>https://<b>kalvium.community</b>/attempt/23a557b0-49e8-405f-b2c6-f71c3ad5e8a0</AddressText>
          <AddressActions>
            <ReadAloud />
            <Star size={21} strokeWidth={1.4} />
          </AddressActions>
        </AddressBar>
        <ToolIcons>
          <ToolIcon><Puzzle size={20} strokeWidth={1.6} /></ToolIcon>
          <ToolSep />
          <ToolIcon><SplitIcon /></ToolIcon>
          <ToolIcon><FavList /></ToolIcon>
          <ToolIcon><CollectAdd /></ToolIcon>
          <ToolIcon><History size={20} strokeWidth={1.6} /></ToolIcon>
          <ToolIcon><HeartCheck /></ToolIcon>
          <ToolIcon><MoreHorizontal size={20} strokeWidth={2} /></ToolIcon>
          <ToolIcon><CopilotIcon /></ToolIcon>
        </ToolIcons>
      </Toolbar>

      <Body>
        <MainColumn>
          <Bookmarks>
            {marks.map((m, i) => (
              <Bookmark key={i} $w={m.w}>
                <BookmarkIcon>{m.icon}</BookmarkIcon>
                {m.label}
              </Bookmark>
            ))}
            <BookmarkMore><ChevronRight size={20} strokeWidth={1.6} /></BookmarkMore>
            <BookmarkSep />
            <Bookmark $w={130}>
              <BookmarkIcon><FolderIcon /></BookmarkIcon>
              Other favorites
            </Bookmark>
          </Bookmarks>
          <Card>
            <Content>
              <TopClip><ClipMark /><ClipBar /></TopClip>
              <Question>How is P<Wedge>∧</Wedge>(P<Arrow>→</Arrow>Q) simplified?</Question>
              <Rule />
              <Options>
                <Option>P</Option>
                <Option $state="wrong">Q<X size={34} strokeWidth={2.8} /></Option>
                <Option $state="right"><span>P <Wedge>∧</Wedge> Q</span><CheckMark size={32} strokeWidth={2} /></Option>
                <Option><span>Q <Arrow>→</Arrow> P</span></Option>
              </Options>
              <Explain>
                <ExplainHead>
                  <HeadLink>Hide Explanation</HeadLink>
                  <ChevronUp size={18} strokeWidth={3} />
                </ExplainHead>
                <ExplainRule />
                <ExplainText>
                  The expression P<Wedge>∧</Wedge>(P<Arrow>→</Arrow>Q) is simplified to P <Wedge>∧</Wedge> Q, where both P and the condition P<Arrow>→</Arrow>Q must be true for the compound statement to be true.
                </ExplainText>
              </Explain>
            </Content>
            <Track>
              <ArrowUp />
              <Thumb />
              <ArrowDown />
            </Track>
            <Help><Lifebuoy /></Help>
          </Card>
        </MainColumn>
        <Sidebar>
          <SideIcon><SideSearch /></SideIcon>
          {sideIcons.map((ic, i) => <SideIcon key={i}>{ic}</SideIcon>)}
          <SideSep />
          <SideIcon><Plus size={24} strokeWidth={1.2} /></SideIcon>
          <SideBottom>
            <FootSep />
            <Settings size={22} strokeWidth={1.5} />
          </SideBottom>
        </Sidebar>
      </Body>

      <Taskbar>
        <Weather>
          <WeatherIcon><WeatherArt /><Badge>1</Badge></WeatherIcon>
          <WeatherText>26°C<small>Mostly cloudy</small></WeatherText>
        </Weather>
        <StartSlot><WinLogo /></StartSlot>
        <SearchPill>
          <Search size={22} strokeWidth={2} />
          <SearchWord>Search</SearchWord>
          <Manta />
        </SearchPill>
        <Apps>
          <AppSlot><TaskView /></AppSlot>
          <AppSlot><TaskCopilot /></AppSlot>
          <AppSlot><Chrome /></AppSlot>
          <AppSlot><Explorer /></AppSlot>
          <AppSlot><Store /></AppSlot>
          <AppSlot><LApp /></AppSlot>
          <AppSlot $dot><WhatsApp /></AppSlot>
          <AppSlot $dot><VSCode /></AppSlot>
          <AppSlot $active><Edge /></AppSlot>
        </Apps>
        <Tray>
          <TraySlot $w={40}><ChevronUp size={20} strokeWidth={1.6} /></TraySlot>
          <TraySlot $w={38}><CloudOff size={20} strokeWidth={1.6} /></TraySlot>
          <TrayText $w={60}>ENG<br />IN</TrayText>
          <TraySlot $w={30}><Wifi size={18} strokeWidth={1.8} /></TraySlot>
          <TraySlot $w={30}><Volume2 size={19} strokeWidth={1.6} /></TraySlot>
          <TraySlot $w={30}><TrayBattery /></TraySlot>
          <TrayText $w={86} $align="right">11:07 PM<br />9/17/2024</TrayText>
          <TraySlot $w={42}><TrayBell /></TraySlot>
        </Tray>
      </Taskbar>
    </Screen>
  );
}
